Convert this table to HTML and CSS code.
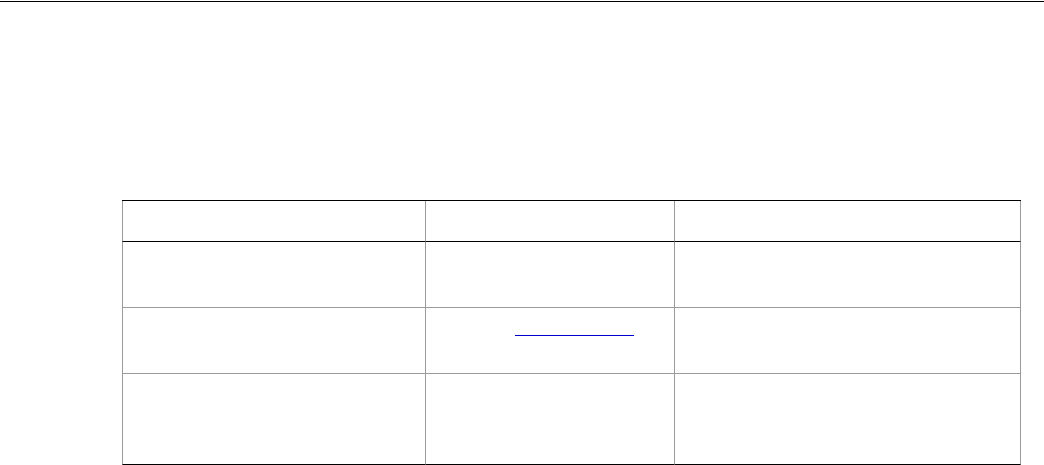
FILE: index.html
```html
<!DOCTYPE html>
<html lang="en">
<head>
<meta charset="utf-8">
<title>Table</title>
<link rel="stylesheet" href="styles.css">
</head>
<body>
<div class="rule"></div>
<main class="content">
  <table class="grid">
    <thead>
      <tr>
        <th class="c1"></th>
        <th class="c2"></th>
        <th class="c3"></th>
      </tr>
    </thead>
    <tbody>
      <tr class="r1">
        <td></td>
        <td></td>
        <td></td>
      </tr>
      <tr class="r2">
        <td></td>
        <td class="linkcell"><a class="link" href="#">&nbsp;</a></td>
        <td></td>
      </tr>
      <tr class="r3">
        <td></td>
        <td></td>
        <td></td>
      </tr>
    </tbody>
  </table>
</main>
</body>
</html>
```
FILE: styles.css
```css
html, body {
  margin: 0;
  padding: 0;
  background: #ffffff;
  font-family: "Liberation Sans", Arial, sans-serif;
  font-size: 14px;
}

.rule {
  margin-top: 1px;
  height: 1px;
  background: #000000;
}

.content {
  padding: 198px 0 0 122px;
}

.grid {
  border-collapse: separate;
  border-spacing: 0;
  table-layout: fixed;
  width: 899px;
  border-top: 1px solid #000000;
}

.grid th,
.grid td {
  box-sizing: border-box;
  padding: 0;
  border-right: 1px solid #9b9b9b;
  border-bottom: 1px solid #9b9b9b;
  vertical-align: top;
}

.grid th:first-child,
.grid td:first-child {
  border-left: 1px solid #9b9b9b;
}

.grid th {
  height: 41px;
  border-bottom-color: #000000;
}

.c1 { width: 304px; }
.c2 { width: 249px; }
.c3 { width: 346px; }

.r1 td { height: 66px; }
.r2 td { height: 66px; }
.r3 td {
  height: 91px;
  border-bottom-color: #000000;
}

.linkcell {
  padding-left: 89px !important;
  padding-top: 25px !important;
}

.link {
  display: inline-block;
  width: 119px;
  height: 2px;
  border-bottom: 1px solid #0000cc;
  vertical-align: top;
  color: transparent;
  text-decoration: none;
  font-size: 1px;
  line-height: 1px;
}
```
